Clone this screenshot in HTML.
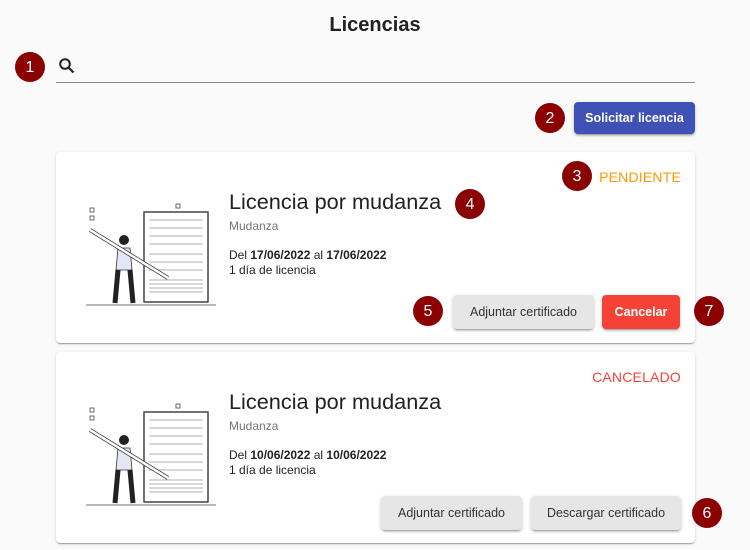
<!DOCTYPE html>
<html><head><meta charset="utf-8"><style>
*{box-sizing:border-box;margin:0;padding:0}
body{width:750px;height:550px;background:#fafafa;font-family:"Liberation Sans",sans-serif;position:relative;overflow:hidden;color:#212121}
.abs{position:absolute}
.badge{position:absolute;width:30px;height:30px;border-radius:50%;background:#8b0000;color:#fff;font-size:16px;line-height:32px;text-align:center}
.card{position:absolute;left:56px;width:639px;height:191px;background:#fff;border-radius:4px;box-shadow:0 2px 1px -1px rgba(0,0,0,.2),0 1px 1px rgba(0,0,0,.14),0 1px 3px rgba(0,0,0,.12)}
.t{position:absolute;left:173px;font-size:21.7px;color:#212121}
.sub{position:absolute;left:173px;font-size:12px;color:#757575}
.d{position:absolute;left:173px;font-size:12px;line-height:15px;color:#212121}
.st{position:absolute;right:14px;top:17px;font-size:14px;letter-spacing:.2px}
.btn{position:absolute;height:34px;border-radius:4px;font-size:12.5px;line-height:34px;text-align:center;box-shadow:0 3px 1px -2px rgba(0,0,0,.2),0 2px 2px rgba(0,0,0,.14),0 1px 5px rgba(0,0,0,.12)}
.g{background:#e6e6e6;color:#333}
.ill{position:absolute;left:30px;top:48px}
</style></head><body>
<div class="abs" style="left:0;width:750px;top:14px;text-align:center;font-size:20px;font-weight:bold">Licencias</div>
<div class="badge" style="left:15px;top:52px">1</div>
<svg class="abs" style="left:58px;top:57px" width="18" height="18" viewBox="0 0 18 18"><circle cx="7" cy="7" r="4.8" fill="none" stroke="#222" stroke-width="2"/><path d="M10.5 10.5L15.5 15.5" stroke="#222" stroke-width="2.2"/></svg>
<div class="abs" style="left:56px;top:82px;width:639px;height:1px;background:#8a8a8a"></div>
<div class="badge" style="left:535px;top:103px">2</div>
<div class="btn abs" style="left:574px;top:102px;width:121px;height:32px;line-height:32px;background:#3f51b5;color:#fff;font-weight:bold">Solicitar licencia</div>

<div class="card" style="top:152px">
<svg class="ill" width="130" height="115" viewBox="0 0 130 115"><g fill="none" stroke="#444" stroke-width=".8"><rect x="58" y="12" width="64" height="90" fill="#fff" stroke-width="1.5"/><path d="M63 20h54M63 28h54M63 36h54M63 44h54M63 54h54M63 62h54M63 70h54M63 80h54M63 84h54M63 88h54M63 92h54" stroke="#999"/><path d="M0 105h130"/><rect x="4" y="8" width="4" height="4"/><rect x="4" y="16" width="4" height="4"/><rect x="90" y="4" width="4" height="4"/></g>
<circle cx="38" cy="40" r="5" fill="#222"/><path d="M32 48h12l2 22h-16z" fill="#e3e6f5" stroke="#333" stroke-width=".8"/><path d="M32 70l-3 33M44 70l3 33" stroke="#222" stroke-width="5"/><path d="M4 30l78 48" stroke="#333" stroke-width="4"/><path d="M4 30l78 48" stroke="#fff" stroke-width="2.5"/></svg>
<div class="t" style="top:37px">Licencia por mudanza</div>
<div class="sub" style="top:67px">Mudanza</div>
<div class="d" style="top:96px">Del <b>17/06/2022</b> al <b>17/06/2022</b><br>1 día de licencia</div>
<div class="st" style="color:#ff9800">PENDIENTE</div>
<div class="btn g" style="left:397px;top:143px;width:141px">Adjuntar certificado</div>
<div class="btn" style="left:546px;top:143px;width:78px;background:#f44336;color:#fff;font-weight:bold">Cancelar</div>
</div>
<div class="badge" style="left:562px;top:161px">3</div>
<div class="badge" style="left:455px;top:189px">4</div>
<div class="badge" style="left:413px;top:296px">5</div>
<div class="badge" style="left:694px;top:296px">7</div>

<div class="card" style="top:352px">
<svg class="ill" width="130" height="115" viewBox="0 0 130 115"><g fill="none" stroke="#444" stroke-width=".8"><rect x="58" y="12" width="64" height="90" fill="#fff" stroke-width="1.5"/><path d="M63 20h54M63 28h54M63 36h54M63 44h54M63 54h54M63 62h54M63 70h54M63 80h54M63 84h54M63 88h54M63 92h54" stroke="#999"/><path d="M0 105h130"/><rect x="4" y="8" width="4" height="4"/><rect x="4" y="16" width="4" height="4"/><rect x="90" y="4" width="4" height="4"/></g>
<circle cx="38" cy="40" r="5" fill="#222"/><path d="M32 48h12l2 22h-16z" fill="#e3e6f5" stroke="#333" stroke-width=".8"/><path d="M32 70l-3 33M44 70l3 33" stroke="#222" stroke-width="5"/><path d="M4 30l78 48" stroke="#333" stroke-width="4"/><path d="M4 30l78 48" stroke="#fff" stroke-width="2.5"/></svg>
<div class="t" style="top:37px">Licencia por mudanza</div>
<div class="sub" style="top:67px">Mudanza</div>
<div class="d" style="top:96px">Del <b>10/06/2022</b> al <b>10/06/2022</b><br>1 día de licencia</div>
<div class="st" style="color:#f44336">CANCELADO</div>
<div class="btn g" style="left:325px;top:144px;width:141px">Adjuntar certificado</div>
<div class="btn g" style="left:475px;top:144px;width:150px">Descargar certificado</div>
</div>
<div class="badge" style="left:692px;top:498px">6</div>
</body></html>
